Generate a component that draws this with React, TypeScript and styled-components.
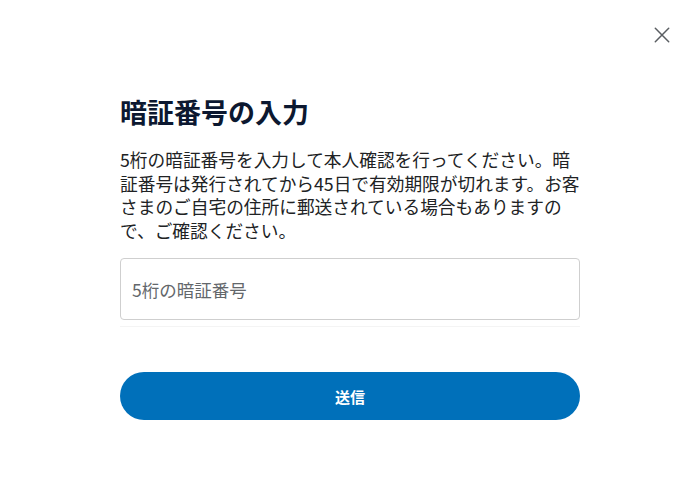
import React from "react";
import styled, { createGlobalStyle } from "styled-components";

const GlobalStyle = createGlobalStyle`
  html, body {
    margin: 0;
    padding: 0;
    background: #ffffff;
  }
  body {
    font-family: "Noto Sans CJK JP", "Noto Sans", sans-serif;
  }
  * { box-sizing: border-box; }
`;

const Page = styled.div`
  width: 700px;
  height: 492px;
  background: #ffffff;
  display: flex;
  flex-direction: column;
`;

const Header = styled.div`
  display: flex;
  justify-content: flex-end;
  padding: 23px 26px 0 0;
`;

const CloseButton = styled.button`
  width: 24px;
  height: 24px;
  padding: 0;
  border: none;
  background: transparent;
  display: flex;
  align-items: center;
  justify-content: center;
  cursor: pointer;
`;

const Content = styled.main`
  width: 460px;
  margin: 46px 0 0 120px;
  display: flex;
  flex-direction: column;
`;

const Title = styled.h1`
  margin: 0;
  font-size: 27px;
  line-height: 37px;
  font-weight: 700;
  color: #0c1830;
  letter-spacing: 0;
`;

const Description = styled.p`
  margin: 18px 0 0 0;
  font-size: 17.7px;
  line-height: 23.5px;
  font-weight: 400;
  color: #202224;
  white-space: nowrap;
`;

const FieldWrap = styled.div`
  margin-top: 16px;
  padding-bottom: 6px;
  border-bottom: 1px solid #f4f4f4;
`;

const Input = styled.input`
  display: block;
  width: 100%;
  height: 62px;
  padding: 1px 12px 0 11px;
  border: 1px solid #cfcfcf;
  border-radius: 4px;
  font-family: "Noto Sans CJK JP", "Noto Sans", sans-serif;
  font-size: 17.5px;
  color: #222426;
  background: #ffffff;
  outline: none;
  &::placeholder {
    color: #63676b;
  }
`;

const SubmitButton = styled.button`
  margin-top: 45px;
  width: 100%;
  height: 48px;
  border: none;
  border-radius: 24px;
  background: #0070ba;
  color: #ffffff;
  font-family: "Noto Sans CJK JP", "Noto Sans", sans-serif;
  font-size: 15px;
  font-weight: 700;
  cursor: pointer;
`;

export default function App() {
  return (
    <>
      <GlobalStyle />
      <Page>
        <Header>
          <CloseButton aria-label="閉じる">
            <svg width="16" height="16" viewBox="0 0 16 16">
              <path
                d="M1.3 1.3 L14.7 14.7 M14.7 1.3 L1.3 14.7"
                stroke="#5a5e62"
                strokeWidth="1.5"
                strokeLinecap="round"
                fill="none"
              />
            </svg>
          </CloseButton>
        </Header>
        <Content>
          <Title>暗証番号の入力</Title>
          <Description>
            5桁の暗証番号を入力して本人確認を行ってください。暗
            <br />
            証番号は発行されてから45日で有効期限が切れます。お客
            <br />
            さまのご自宅の住所に郵送されている場合もありますの
            <br />
            で、ご確認ください。
          </Description>
          <FieldWrap>
            <Input type="text" inputMode="numeric" placeholder="5桁の暗証番号" />
          </FieldWrap>
          <SubmitButton>送信</SubmitButton>
        </Content>
      </Page>
    </>
  );
}
